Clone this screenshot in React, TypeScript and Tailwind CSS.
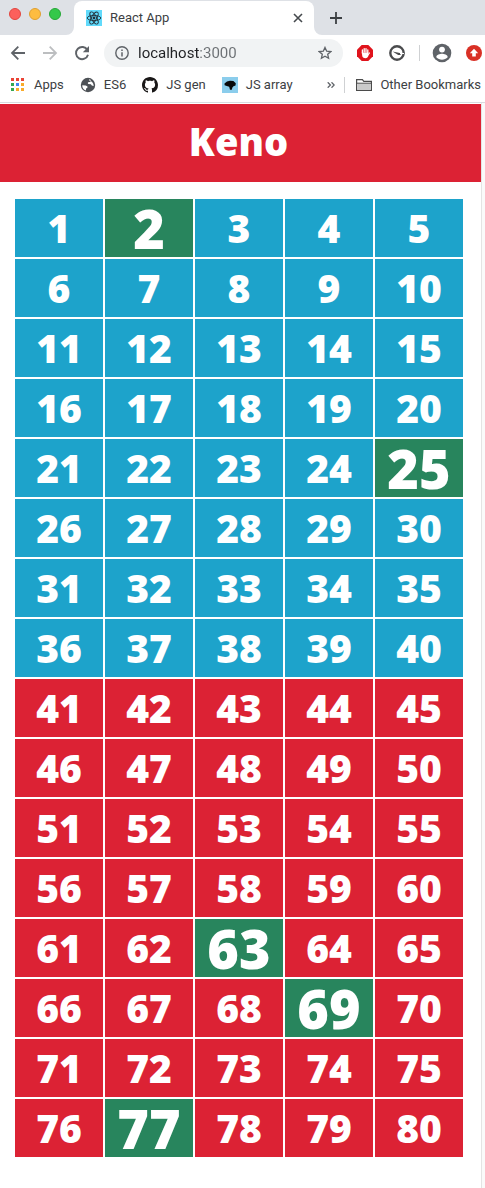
import React from "react";

const drawn = new Set([2, 25, 63, 69, 77]);
const numbers = Array.from({ length: 80 }, (_, i) => i + 1);

function ReactLogo() {
  return (
    <svg viewBox="0 0 16 16" className="size-4 shrink-0" aria-hidden="true">
      <rect width="16" height="16" fill="#61dafb" />
      <g fill="none" stroke="#23303a" strokeWidth="0.9">
        <ellipse cx="8" cy="8" rx="6.8" ry="2.6" />
        <ellipse cx="8" cy="8" rx="6.8" ry="2.6" transform="rotate(60 8 8)" />
        <ellipse cx="8" cy="8" rx="6.8" ry="2.6" transform="rotate(120 8 8)" />
      </g>
      <circle cx="8" cy="8" r="1.4" fill="#23303a" />
    </svg>
  );
}

function TabStrip() {
  return (
    <div className="flex h-[35px] bg-[#dee1e6]">
      <div className="flex w-[74px] shrink-0 gap-2 pl-[9px] pt-2">
        <span className="size-3 rounded-full border border-[#e2463f] bg-[#fc605c]" />
        <span className="size-3 rounded-full border border-[#e0a030] bg-[#fdbc40]" />
        <span className="size-3 rounded-full border border-[#25a836] bg-[#34c84a]" />
      </div>
      <div className="relative mt-px flex w-60 items-center rounded-t-lg bg-white pl-3 pr-[11px]">
        <svg viewBox="0 0 8 8" className="absolute bottom-0 -left-2 size-2" aria-hidden="true">
          <path d="M8 0v8H0a8 8 0 0 0 8-8" fill="#fff" />
        </svg>
        <svg viewBox="0 0 8 8" className="absolute -right-2 bottom-0 size-2" aria-hidden="true">
          <path d="M0 0v8h8a8 8 0 0 1-8-8" fill="#fff" />
        </svg>
        <ReactLogo />
        <span className="ml-2 flex-1 text-[13px] text-[#3c4043]">React App</span>
        <button aria-label="Close tab">
          <svg viewBox="0 0 10 10" className="size-[10px]" aria-hidden="true">
            <path d="M1 1l8 8M9 1l-8 8" stroke="#45494d" strokeWidth="1.6" />
          </svg>
        </button>
      </div>
      <button aria-label="New tab" className="ml-4">
        <svg viewBox="0 0 12 12" className="size-3" aria-hidden="true">
          <path d="M6 0v12M0 6h12" stroke="#3c4043" strokeWidth="1.8" />
        </svg>
      </button>
    </div>
  );
}

function Toolbar() {
  return (
    <div className="flex h-9 items-center pl-[10px] pr-[3px]">
      <button aria-label="Back">
        <svg viewBox="0 0 16 16" className="size-4" fill="none" stroke="#5f6368" strokeWidth="1.8">
          <path d="M15 8H2M8.3 1.7L2 8l6.3 6.3" />
        </svg>
      </button>
      <button aria-label="Forward" className="ml-4">
        <svg viewBox="0 0 16 16" className="size-4" fill="none" stroke="#bcbec0" strokeWidth="1.8">
          <path d="M1 8h13M7.7 1.7L14 8l-6.3 6.3" />
        </svg>
      </button>
      <button aria-label="Reload" className="ml-4">
        <svg viewBox="0 0 16 16" className="size-4" fill="none">
          <path d="M13.4 5A6.1 6.1 0 1 0 14 9.7" stroke="#5f6368" strokeWidth="1.9" />
          <path d="M15 1v6.2H8.8z" fill="#5f6368" />
        </svg>
      </button>
      <div className="ml-[14px] flex h-7 min-w-0 flex-1 items-center rounded-full bg-[#f1f3f4] px-[11px]">
        <svg viewBox="0 0 14 14" className="size-[14px] shrink-0" aria-hidden="true">
          <circle cx="7" cy="7" r="6.2" fill="none" stroke="#5f6368" strokeWidth="1.4" />
          <path d="M7 6.2v4.3M7 3.5v1.5" stroke="#5f6368" strokeWidth="1.5" />
        </svg>
        <input
          type="text"
          aria-label="Address"
          defaultValue="localhost:3000"
          className="ml-[9px] h-6 min-w-0 flex-1 bg-[linear-gradient(90deg,#202124_62px,#6b6f73_62px)] bg-clip-text text-[15px] text-transparent caret-[#202124] outline-none"
        />
        <button aria-label="Bookmark this page">
          <svg viewBox="0 0 14 14" className="size-[14px]" aria-hidden="true">
            <path
              d="M7 1.4l1.7 3.8 4.1.4-3.1 2.7.9 4L7 10.2l-3.600 2.100.9-4-3.100-2.700 4.100-.4z"
              fill="none"
              stroke="#5f6368"
              strokeWidth="1.3"
            />
          </svg>
        </button>
      </div>
      <button aria-label="Ad blocker" className="ml-[14px] shrink-0">
        <svg viewBox="0 0 16 16" className="size-4" aria-hidden="true">
          <path d="M4.700 0h6.600L16 4.700v6.600L11.300 16H4.700L0 11.300V4.700z" fill="#e0131c" />
          <g fill="none" stroke="#fff" strokeWidth="1.3" strokeLinecap="round">
            <path d="M5.400 8V4.900M7.200 7V3.600M9 7V3.600M10.800 8V4.900" />
          </g>
          <path d="M4.750 7.500h6.700v2.500c0 2-1.200 3.200-3.200 3.200-1.400 0-2.300-.6-2.900-1.700z" fill="#fff" />
          <path d="M11 10l1.500-2" stroke="#fff" strokeWidth="1.200" strokeLinecap="round" />
        </svg>
      </button>
      <button aria-label="Page speed" className="ml-4 shrink-0">
        <svg viewBox="0 0 16 16" className="size-4" aria-hidden="true">
          <circle cx="8" cy="8" r="6.700" fill="none" stroke="#4a4b4d" strokeWidth="2.400" />
          <path d="M3.600 6.400l8.400 1.800c.8 1.200-1.800 2.400-3.200 1.500z" fill="#4a4b4d" />
          <path d="M11 8.500h4" stroke="#fff" strokeWidth="1" />
        </svg>
      </button>
      <span className="ml-[14px] h-4 w-px shrink-0 bg-[#cfd1d3]" />
      <button aria-label="Profile" className="ml-3 shrink-0">
        <svg viewBox="0 0 20 20" className="size-5" aria-hidden="true">
          <circle cx="10" cy="10" r="9.300" fill="#5f6368" />
          <circle cx="10" cy="6.600" r="2.900" fill="#fff" />
          <path d="M4.300 14.200c0-2.500 3.800-3.400 5.700-3.400s5.700.9 5.700 3.400c-2.900 3.300-8.500 3.300-11.400 0z" fill="#fff" />
        </svg>
      </button>
      <button aria-label="Update" className="ml-[14px] shrink-0">
        <svg viewBox="0 0 16 16" className="size-4" aria-hidden="true">
          <circle cx="8" cy="8" r="8" fill="#d93025" />
          <path d="M8 3.800l4.200 4.400H9.800v3.400H6.200V8.200H3.800z" fill="#fff" />
        </svg>
      </button>
    </div>
  );
}

function Apps() {
  const colors = ["#ea4335", "#ea4335", "#ea4335", "#34a853", "#4285f4", "#f9ab2a", "#34a853", "#f9ab2a", "#f9ab2a"];
  return (
    <svg viewBox="0 0 13 13" className="size-[13px]" aria-hidden="true">
      {colors.map((c, i) => (
        <rect key={i} x={(i % 3) * 5} y={Math.floor(i / 3) * 5} width="3" height="3" fill={c} />
      ))}
    </svg>
  );
}

function Bookmarks() {
  return (
    <nav className="flex h-8 items-center whitespace-nowrap border-b border-[#d9dbdf] pb-1 pl-[11px] text-[13px] text-[#3c4043]">
      <a href="#apps" className="flex items-center gap-[10px]">
        <Apps />
        Apps
      </a>
      <a href="#es6" className="ml-4 flex items-center gap-2">
        <svg viewBox="0 0 16 16" className="size-4" aria-hidden="true">
          <circle cx="8" cy="8" r="7.200" fill="#4d5156" />
          <path d="M2.300 8.200l3.500.2 1.700 1.200-.2 1.300-1.300.6v2C3.600 12.800 2 10.800 2.300 8.200zM9.200 2.200l1 .4.600 1-.6 1.300H8.600l-.9 1 .6 1.200 2.600.2.900 1.300 1.900.3c-.1-2.800-1.500-5-4.500-5.500z" fill="#fff" />
        </svg>
        ES6
      </a>
      <a href="#gen" className="ml-4 flex items-center gap-2">
        <svg viewBox="0 0 16 16" className="size-4" aria-hidden="true">
          <path
            d="M8 0C3.580 0 0 3.580 0 8c0 3.540 2.290 6.530 5.470 7.590.4.070.55-.17.55-.38 0-.19-.01-.82-.01-1.490-2.010.37-2.530-.49-2.690-.94-.09-.23-.48-.94-.82-1.130-.28-.15-.68-.52-.01-.53.63-.01 1.080.58 1.230.82.72 1.210 1.870.87 2.330.66.07-.52.28-.87.51-1.070-1.780-.2-3.640-.89-3.640-3.950 0-.87.31-1.590.82-2.150-.08-.2-.36-1.020.08-2.120 0 0 .67-.21 2.200.82.640-.18 1.320-.27 2-.27s1.360.09 2 .27c1.530-1.040 2.200-.82 2.200-.82.440 1.100.16 1.920.08 2.120.51.56.82 1.270.82 2.150 0 3.070-1.870 3.750-3.650 3.950.29.25.54.73.54 1.480 0 1.070-.01 1.930-.01 2.200 0 .21.15.46.55.38A8.010 8.010 0 0 0 16 8c0-4.420-3.580-8-8-8z"
            fill="#191717"
          />
        </svg>
        JS gen
      </a>
      <a href="#array" className="ml-4 flex items-center gap-2">
        <svg viewBox="0 0 16 16" className="size-4" aria-hidden="true">
          <rect width="16" height="16" fill="#8bcdec" />
          <path d="M2.500 6.500L5 4.600 8 3.800l3.400.2 2.400 2.300-.3 2.200-2 .8-1.100 1.200-.6 2.200H8l-.8-3-2.400-.7-2.200-.8z" fill="#090909" />
        </svg>
        JS array
      </a>
      <button aria-label="More bookmarks" className="ml-auto">
        <svg viewBox="0 0 8 6" className="h-[6px] w-2" aria-hidden="true">
          <path d="M.7.300L3.400 3 .7 5.700M4.500.300L7.200 3 4.500 5.700" fill="none" stroke="#5f6368" strokeWidth="1.300" />
        </svg>
      </button>
      <span className="ml-[9px] h-4 w-px bg-[#cfd1d3]" />
      <a href="#other" className="ml-[11px] mr-1 flex items-center gap-2">
        <svg viewBox="0 0 16 14" className="h-[14px] w-4" aria-hidden="true">
          <path d="M.6 12.400V1.600h5.800l1.400 1.800h7.600v9z" fill="#fff" stroke="#4b4b4b" strokeWidth="1.200" />
          <path d="M1.200 5.500h13.600v6.300H1.200z" fill="#cacaca" />
          <path d="M1 5.200h14" stroke="#4b4b4b" />
        </svg>
        Other Bookmarks
      </a>
    </nav>
  );
}

export default function App() {
  return (
    <div className="flex min-h-screen flex-col bg-white font-['Roboto',sans-serif]">
      <header>
        <TabStrip />
        <Toolbar />
        <Bookmarks />
      </header>
      <div className="flex flex-1 font-['Noto_Sans',sans-serif] text-white">
        <main className="min-w-0 flex-1">
          <h1 className="mt-px flex h-[78px] items-center justify-center bg-[#dc2234] pb-1 pr-1 text-[38px] font-black">
            Keno
          </h1>
          <div className="grid grid-cols-5 gap-[2px] pb-[31px] pl-[15px] pr-[18px] pt-[17px]">
            {numbers.map((n) => (
              <div
                key={n}
                className={`flex h-[58px] items-center justify-center pb-px font-black leading-[58px] ${
                  drawn.has(n)
                    ? "bg-[#28855d] text-[54px]"
                    : n <= 40
                      ? "bg-[#1da3cb] text-[39px]"
                      : "bg-[#dc2234] text-[39px]"
                }`}
              >
                {n}
              </div>
            ))}
          </div>
        </main>
        <div className="w-1 border-l border-[#e4e4e4] bg-[#fafafa]" />
      </div>
    </div>
  );
}
